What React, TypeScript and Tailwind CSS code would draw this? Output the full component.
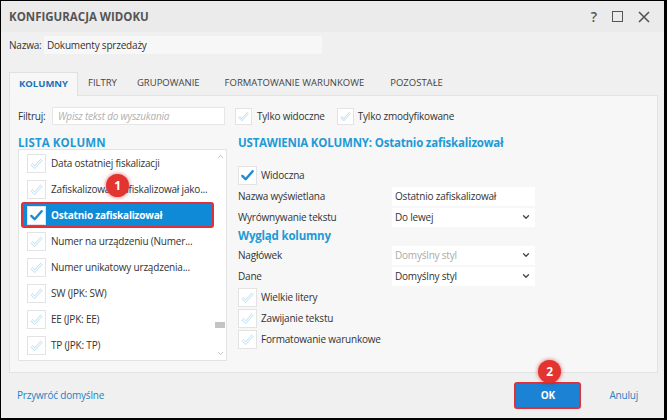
import React from "react";
import { ChevronDown, ChevronUp } from "lucide-react";

const font = { fontFamily: '"Open Sans", "Noto Sans", sans-serif' };

function Check({ on = false, size = 19 }: { on?: boolean; size?: number }) {
  return (
    <div
      className="shrink-0 bg-white border border-[#e3e3e3] flex items-center justify-center"
      style={{ width: size, height: size }}
    >
      <svg width={size - 4} height={size - 4} viewBox="0 0 16 16">
        {on ? (
          <path d="M2.5 8.5 L6 12 L13.5 3.5" fill="none" stroke="#1c8ad6" strokeWidth="2.6" strokeLinecap="round" strokeLinejoin="round" />
        ) : (
          <>
            <path d="M2.5 8.5 L6 12 L13.5 3.5" fill="none" stroke="#b9e0f3" strokeWidth="2.8" strokeLinejoin="round" />
            <path d="M2.5 8.5 L6 12 L13.5 3.5" fill="none" stroke="#ffffff" strokeWidth="1.2" strokeLinejoin="round" />
          </>
        )}
      </svg>
    </div>
  );
}

function Badge({ n }: { n: number }) {
  return (
    <div className="w-[23px] h-[23px] rounded-full bg-[#e3342f] text-white text-[12px] font-bold flex items-center justify-center shadow-[0_0_4px_rgba(200,0,0,0.6)]">
      {n}
    </div>
  );
}

const rows = [
  "Data ostatniej fiskalizacji",
  "Zafiskalizował (Zafiskalizował jako...",
  "Ostatnio zafiskalizował",
  "Numer na urządzeniu (Numer...",
  "Numer unikatowy urządzenia...",
  "SW (JPK: SW)",
  "EE (JPK: EE)",
  "TP (JPK: TP)",
];

function Select({ value, disabled = false }: { value: string; disabled?: boolean }) {
  return (
    <div className="w-[143px] h-[19px] bg-white flex items-center justify-between pl-[3px] pr-[4px]">
      <span className={disabled ? "text-[#aaaaaa]" : "text-[#333]"}>{value}</span>
      <ChevronDown size={10} strokeWidth={3} className="text-[#444]" />
    </div>
  );
}

export default function App() {
  return (
    <div
      style={font}
      className="w-[667px] h-[420px] bg-[#f0f0f0] border-l border-t border-r-[3px] border-b-2 border-black flex flex-col text-[10px] tracking-[-0.2px] text-[#333] overflow-hidden"
    >
      {/* Title bar */}
      <div className="h-[31px] shrink-0 bg-[#ebebeb] flex items-center justify-between pl-[8px] pr-[14px]">
        <span className="text-[11.5px] font-bold text-[#555] tracking-[0px]">KONFIGURACJA WIDOKU</span>
        <div className="flex items-center gap-[15px] text-[#555]">
          <span className="text-[14px] font-semibold">?</span>
          <div className="w-[11px] h-[11px] border-[1.5px] border-[#555]" />
          <svg width="12" height="12" viewBox="0 0 12 12">
            <path d="M1 1 L11 11 M11 1 L1 11" stroke="#555" strokeWidth="1.6" />
          </svg>
        </div>
      </div>

      {/* Name */}
      <div className="flex items-center pl-[8px] mt-[4px] h-[18px]">
        <span className="w-[35px]">Nazwa:</span>
        <div className="w-[278px] h-[18px] bg-[#f7f7f7] flex items-center pl-[3px]">Dokumenty sprzedaży</div>
      </div>

      {/* Tabs */}
      <div className="flex items-end pl-[8px] mt-[18px] h-[23px] text-[9.5px] tracking-[0px]">
        <div className="h-[24px] w-[69px] bg-[#f7f7f7] border border-b-0 border-[#e0e0e0] flex items-center justify-center font-bold text-[#1a73b8] relative top-[1px]">
          KOLUMNY
        </div>
        <div className="h-[23px] flex items-center pl-[10px] text-[#444]">FILTRY</div>
        <div className="h-[23px] flex items-center pl-[20px] text-[#444]">GRUPOWANIE</div>
        <div className="h-[23px] flex items-center pl-[25px] text-[#444]">FORMATOWANIE WARUNKOWE</div>
        <div className="h-[23px] flex items-center pl-[26px] text-[#444]">POZOSTAŁE</div>
      </div>

      {/* Panel */}
      <div className="mx-[8px] w-[649px] h-[278px] bg-[#f7f7f7] border border-[#e3e3e3] flex flex-col px-[8px]">
        <div className="flex items-center h-[18px] mt-[11px]">
          <span className="w-[34px]">Filtruj:</span>
          <div className="w-[173px] h-[18px] bg-white border border-[#e6e6e6] flex items-center pl-[5px] italic text-[#b0b0b0]">
            Wpisz tekst do wyszukania
          </div>
          <div className="ml-[10px]"><Check size={17} /></div>
          <span className="ml-[5px]">Tylko widoczne</span>
          <div className="ml-[12px]"><Check size={17} /></div>
          <span className="ml-[4px]">Tylko zmodyfikowane</span>
        </div>

        <div className="flex mt-[11px]">
          {/* Left column */}
          <div className="w-[209px] flex flex-col">
            <div className="text-[11.5px] font-bold text-[#1e9ad6] h-[14px] leading-[14px] tracking-[0.1px]">LISTA KOLUMN</div>
            <div className="mt-[-1px] h-[212px] bg-white border border-[#e3e3e3] flex relative overflow-hidden">
              <div className="flex-1 flex flex-col pl-[2px]">
                {rows.map((r, i) =>
                  i === 2 ? (
                    <div
                      key={i}
                      className="h-[26px] bg-[#0f8ad6] border-2 border-[#e2303b] rounded-[3px] flex items-center pl-[4px] gap-[5px] text-white font-bold"
                    >
                      <Check on size={19} />
                      <span>{r}</span>
                    </div>
                  ) : (
                    <div key={i} className="h-[26px] flex items-center pl-[6px] gap-[5px]">
                      <Check size={19} />
                      <span className="whitespace-nowrap">{r}</span>
                    </div>
                  )
                )}
              </div>
              <div className="w-[12px] flex flex-col items-center justify-between py-[2px] text-[#aaa]">
                <ChevronUp size={9} strokeWidth={2} />
                <div className="w-[10px] h-[6px] bg-[#c4c4c4] mt-[140px]" />
                <ChevronDown size={9} strokeWidth={2} />
              </div>
              <div className="absolute left-[87px] top-[24px]">
                <Badge n={1} />
              </div>
            </div>
          </div>

          {/* Right column */}
          <div className="ml-[11px] flex flex-col">
            <div className="text-[11.5px] font-bold text-[#1e9ad6] h-[14px] leading-[14px] whitespace-nowrap">
              USTAWIENIA KOLUMNY: Ostatnio zafiskalizował
            </div>
            <div className="flex items-center mt-[16px] gap-[4px]">
              <Check on size={19} />
              <span>Widoczna</span>
            </div>
            <div className="flex items-center mt-[1px] h-[20px]">
              <span className="w-[154px]">Nazwa wyświetlana</span>
              <div className="w-[143px] h-[19px] bg-white flex items-center pl-[3px]">Ostatnio zafiskalizował</div>
            </div>
            <div className="flex items-center mt-[1px] h-[20px]">
              <span className="w-[154px]">Wyrównywanie tekstu</span>
              <Select value="Do lewej" />
            </div>
            <div className="text-[11.5px] font-bold text-[#1e9ad6] mt-[1px] h-[16px] leading-[16px]">Wygląd kolumny</div>
            <div className="flex items-center mt-[1px] h-[20px]">
              <span className="w-[154px]">Nagłówek</span>
              <Select value="Domyślny styl" disabled />
            </div>
            <div className="flex items-center mt-[1px] h-[20px]">
              <span className="w-[154px]">Dane</span>
              <Select value="Domyślny styl" />
            </div>
            <div className="flex flex-col gap-[2px] mt-[2px]">
              {["Wielkie litery", "Zawijanie tekstu", "Formatowanie warunkowe"].map((t) => (
                <div key={t} className="flex items-center gap-[4px]">
                  <Check size={19} />
                  <span>{t}</span>
                </div>
              ))}
            </div>
          </div>
        </div>
      </div>

      {/* Footer */}
      <div className="flex-1 flex items-center pl-[16px] pr-[26px] relative">
        <span className="text-[#2a7fc2]">Przywróć domyślne</span>
        <div className="ml-auto flex items-center">
          <div className="w-[67px] h-[27px] bg-[#1b82d4] border-2 border-[#e2303b] rounded-[3px] flex items-center justify-center text-white font-bold">
            OK
          </div>
          <span className="ml-[28px] text-[#2a7fc2]">Anuluj</span>
        </div>
        <div className="absolute left-[537px] top-[-13px]">
          <Badge n={2} />
        </div>
      </div>
    </div>
  );
}
